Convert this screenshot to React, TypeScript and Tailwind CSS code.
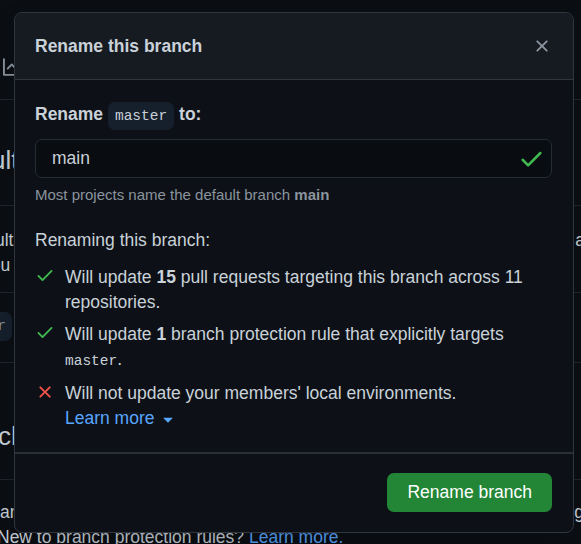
import type { ReactNode } from 'react';

const sans = "font-['Liberation_Sans',Arial,sans-serif]";
const mono = "font-['Liberation_Mono','DejaVu_Sans_Mono',monospace]";

function CheckIcon({ className }: { className?: string }) {
  return (
    <svg viewBox="0 0 16 16" fill="currentColor" className={className}>
      <path d="M13.78 4.22a.75.75 0 0 1 0 1.06l-7.25 7.25a.75.75 0 0 1-1.06 0L2.22 9.28a.751.751 0 0 1 .018-1.042.751.751 0 0 1 1.042-.018L6 10.94l6.72-6.72a.75.75 0 0 1 1.06 0Z" />
    </svg>
  );
}

function XIcon({ className }: { className?: string }) {
  return (
    <svg viewBox="0 0 16 16" fill="currentColor" className={className}>
      <path d="M3.72 3.72a.75.75 0 0 1 1.06 0L8 6.94l3.22-3.22a.749.749 0 0 1 1.275.326.749.749 0 0 1-.215.734L9.06 8l3.22 3.22a.749.749 0 0 1-.326 1.275.749.749 0 0 1-.734-.215L8 9.06l-3.22 3.22a.751.751 0 0 1-1.042-.018.751.751 0 0 1-.018-1.042L6.94 8 3.72 4.78a.75.75 0 0 1 0-1.06Z" />
    </svg>
  );
}

function GraphIcon({ className }: { className?: string }) {
  return (
    <svg viewBox="0 0 16 16" fill="currentColor" className={className}>
      <path d="M1.5 1.75V13.5h13.75a.75.75 0 0 1 0 1.5H.75a.75.75 0 0 1-.75-.75V1.75a.75.75 0 0 1 1.5 0Zm14.28 2.53-5.25 5.25a.75.75 0 0 1-1.06 0L7 7.06 4.28 9.78a.751.751 0 0 1-1.042-.018.751.751 0 0 1-.018-1.042l3.25-3.25a.75.75 0 0 1 1.06 0L10 7.94l4.72-4.72a.751.751 0 0 1 1.042.018.751.751 0 0 1 .018 1.042Z" />
    </svg>
  );
}

function Item({ icon, children }: { icon: 'ok' | 'no'; children: ReactNode }) {
  return (
    <li className="flex gap-[10px]">
      {icon === 'ok' ? (
        <CheckIcon className="w-5 h-5 shrink-0 text-[#3fb950]" />
      ) : (
        <XIcon className="w-5 h-5 shrink-0 mt-[1px] text-[#f85149]" />
      )}
      <div className="leading-[25px]">{children}</div>
    </li>
  );
}

function RenameDialog() {
  return (
    <div className="absolute left-[14px] top-[12px] w-[560px] rounded-[8px] border border-[#30363d] bg-[#0d1117] overflow-hidden shadow-2xl">
      {/* Header */}
      <div className="h-[67px] flex items-center justify-between pl-[20px] pr-[21px] bg-[#161b22] border-b border-[#30363d]">
        <h2 className="text-[17.5px] font-bold text-[#c9d1d9]">Rename this branch</h2>
        <XIcon className="w-5 h-5 text-[#8b949e]" />
      </div>

      {/* Body */}
      <div className="pl-[20px] pr-[21px] pt-[22px] pb-[21px] text-[17.5px] text-[#c9d1d9]">
        <div className="leading-[25px] font-bold">
          Rename{' '}
          <code className={`${mono} font-normal text-[14.5px] bg-[#16202d] rounded-[7px] px-[7px] py-[6px]`}>master</code>{' '}
          to:
        </div>

        <div className="mt-[10px] h-[39px] flex items-center justify-between rounded-[7px] border border-[#262c34] bg-[#090c10] pl-[16px] pr-[6px]">
          <span className="text-[17.5px] text-[#c9d1d9]">main</span>
          <CheckIcon className="w-[27px] h-[27px] text-[#3fb950]" />
        </div>

        <p className="mt-[7px] text-[15px] leading-[20px] text-[#8b949e]">
          Most projects name the default branch <strong className="font-bold">main</strong>
        </p>

        <p className="mt-[23px] leading-[25px]">Renaming this branch:</p>

        <ul className="mt-[12px] flex flex-col gap-[7px]">
          <Item icon="ok">
            Will update <strong>15</strong> pull requests targeting this branch across 11 repositories.
          </Item>
          <Item icon="ok">
            Will update <strong>1</strong> branch protection rule that explicitly targets{' '}
            <code className={`${mono} text-[14.5px]`}>master</code>.
          </Item>
          <Item icon="no">
            Will not update your members' local environments.
            <br />
            <span className="inline-flex items-center gap-[6px] text-[#58a6ff]">
              Learn more
              <svg viewBox="0 0 16 16" fill="currentColor" className="w-5 h-5 -ml-[3px]">
                <path d="m4.427 7.427 3.396 3.396a.25.25 0 0 0 .354 0l3.396-3.396A.25.25 0 0 0 11.396 7H4.604a.25.25 0 0 0-.177.427Z" />
              </svg>
            </span>
          </Item>
        </ul>
      </div>

      {/* Footer */}
      <div className="border-t-2 border-[#2a2f37] flex justify-end px-[21px] pt-[19px] pb-[20px]">
        <button className="h-[39px] px-[20px] rounded-[7px] bg-[#238636] text-white text-[17.5px]">
          Rename branch
        </button>
      </div>
    </div>
  );
}

export default function App() {
  return (
    <div className={`${sans} relative w-full h-[544px] overflow-hidden bg-[#0b0f14] text-[#c9d1d9]`}>
      {/* Page behind the dialog */}
      <div className="h-[100px] border-b border-[#21262d] pt-[57px] pl-[3px]">
        <GraphIcon className="w-5 h-5 text-[#8b949e]" />
      </div>
      <div className="h-[106px] border-b border-[#21262d] pt-[44px]">
        <h1 className="text-[26px] leading-[32px] -ml-[64px] whitespace-nowrap">Default branch</h1>
      </div>
      <div className="h-[87px] border-b border-[#21262d] pt-[22px] flex justify-between text-[17.5px] leading-[25px]">
        <div className="-ml-[42px] whitespace-nowrap">
          <div>Default</div>
          <div className="ml-[24px]">you :</div>
        </div>
        <div className="whitespace-nowrap mr-[-4px]">a</div>
      </div>
      <div className="h-[70px] border-b border-[#21262d] pt-[19px]">
        <div className={`${mono} -ml-[40px] w-[52px] h-[29px] rounded-[7px] bg-[#16202d] flex items-center justify-end pr-[6px] text-[14.5px] text-[#8b949e]`}>
          r
        </div>
      </div>
      <div className="h-[117px] border-b border-[#21262d] pt-[57px]">
        <h2 className="text-[26px] leading-[32px] -ml-[57px] whitespace-nowrap">Branch</h2>
      </div>
      <div className="pt-[20px] text-[17.5px] leading-[25px]">
        <div className="flex justify-between whitespace-nowrap">
          <span>an</span>
          <span className="mr-[-3px]">g</span>
        </div>
        <div className="whitespace-nowrap -ml-[3px]">
          New to branch protection rules? <span className="text-[#58a6ff]">Learn more.</span>
        </div>
      </div>

      <RenameDialog />
    </div>
  );
}
